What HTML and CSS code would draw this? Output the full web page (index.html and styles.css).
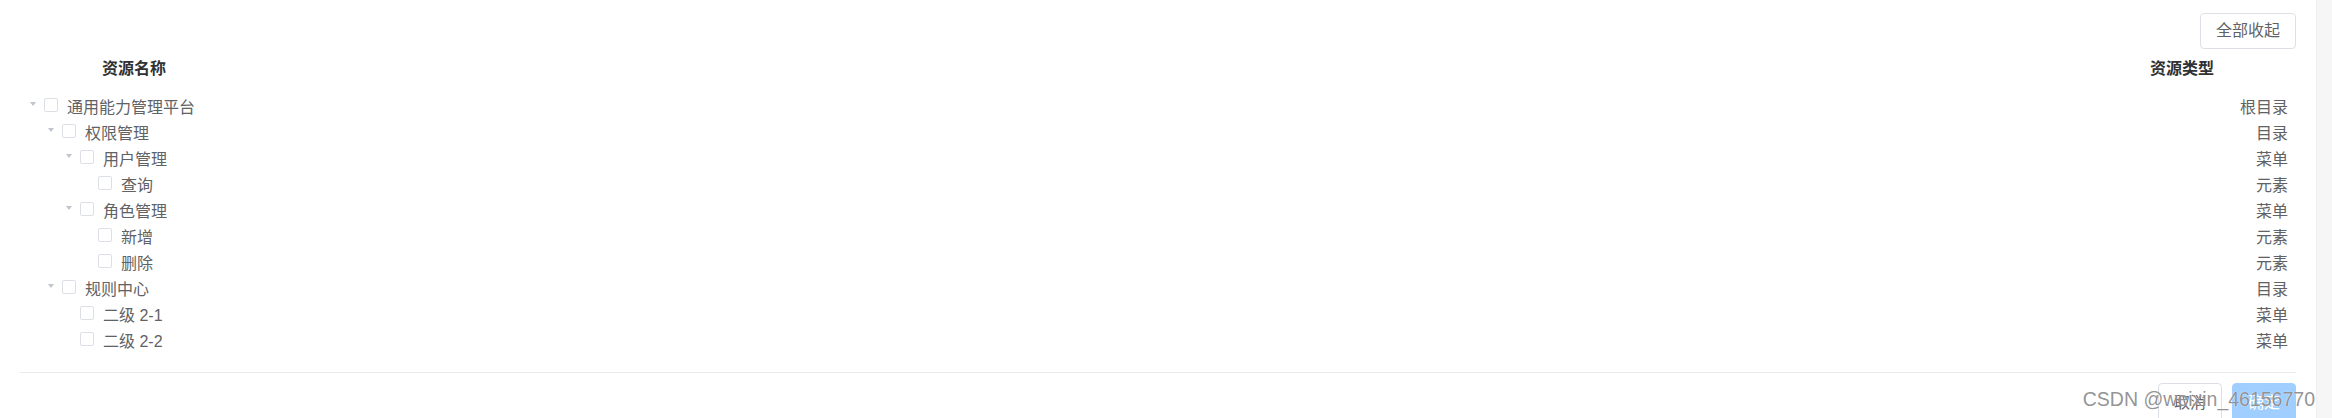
FILE: index.html
```html
<!DOCTYPE html>
<html lang="zh-CN">
<head>
  <meta charset="UTF-8">
  <meta name="viewport" content="width=device-width, initial-scale=1">
  <title>资源配置</title>
  <link rel="stylesheet" href="styles.css">
</head>
<body>
  <div class="page">
    <div class="panel">
      <div class="toolbar">
        <button class="btn">全部收起</button>
      </div>

      <div class="thead">
        <span>资源名称</span>
        <span>资源类型</span>
      </div>

      <ul class="tree">
        <li class="node lv1">
          <div class="name"><i class="caret"></i><span class="check"></span><span class="label">通用能力管理平台</span></div>
          <span class="type">根目录</span>
        </li>
        <li class="node lv2">
          <div class="name"><i class="caret"></i><span class="check"></span><span class="label">权限管理</span></div>
          <span class="type">目录</span>
        </li>
        <li class="node lv3">
          <div class="name"><i class="caret"></i><span class="check"></span><span class="label">用户管理</span></div>
          <span class="type">菜单</span>
        </li>
        <li class="node lv4">
          <div class="name"><i class="caret leaf"></i><span class="check"></span><span class="label">查询</span></div>
          <span class="type">元素</span>
        </li>
        <li class="node lv3">
          <div class="name"><i class="caret"></i><span class="check"></span><span class="label">角色管理</span></div>
          <span class="type">菜单</span>
        </li>
        <li class="node lv4">
          <div class="name"><i class="caret leaf"></i><span class="check"></span><span class="label">新增</span></div>
          <span class="type">元素</span>
        </li>
        <li class="node lv4">
          <div class="name"><i class="caret leaf"></i><span class="check"></span><span class="label">删除</span></div>
          <span class="type">元素</span>
        </li>
        <li class="node lv2">
          <div class="name"><i class="caret"></i><span class="check"></span><span class="label">规则中心</span></div>
          <span class="type">目录</span>
        </li>
        <li class="node lv3">
          <div class="name"><i class="caret leaf"></i><span class="check"></span><span class="label">二级 2-1</span></div>
          <span class="type">菜单</span>
        </li>
        <li class="node lv3">
          <div class="name"><i class="caret leaf"></i><span class="check"></span><span class="label">二级 2-2</span></div>
          <span class="type">菜单</span>
        </li>
      </ul>

      <div class="footer">
        <button class="btn">取消</button>
        <button class="btn btn-primary" disabled>确定</button>
      </div>
    </div>
    <div class="scroll-track"></div>

    <div class="watermark">CSDN @weixin_46156770</div>
  </div>
</body>
</html>
```

FILE: styles.css
```css
html, body {
  margin: 0;
  height: 100%;
  overflow: hidden;
}

body {
  font-family: 'Liberation Sans', 'Noto Sans CJK SC', sans-serif;
  font-size: 16px;
  color: #606266;
  background: #fff;
}

.page {
  position: relative;
  display: flex;
  height: 100%;
}

.panel {
  flex: 1;
  padding: 0 20px;
}

.scroll-track {
  width: 15px;
  background: #f6f6f7;
  border-left: 1px solid #f0f0f2;
}

.toolbar {
  display: flex;
  justify-content: flex-end;
  padding-top: 13px;
}

.btn {
  height: 36px;
  padding: 0 15px;
  border: 1px solid #dcdfe6;
  border-radius: 4px;
  background: #fff;
  color: #606266;
  font-family: inherit;
  font-size: 16px;
  line-height: 1;
  cursor: pointer;
}

.btn-primary {
  background: #a0cfff;
  border-color: #a0cfff;
  color: #fff;
  cursor: not-allowed;
}

.thead {
  display: flex;
  justify-content: space-between;
  align-items: center;
  height: 26px;
  margin-top: 5px;
  padding: 0 82px;
  font-weight: bold;
  color: #303133;
}

.tree {
  list-style: none;
  margin: 14px 0 0;
  padding: 0;
}

.node {
  display: flex;
  justify-content: space-between;
  align-items: center;
  height: 26px;
  margin-top: -1px;
  margin-bottom: 1px;
}

.lv2 { padding-left: 18px; }
.lv3 { padding-left: 36px; }
.lv4 { padding-left: 54px; }

.name {
  display: flex;
  align-items: center;
}

.caret {
  display: flex;
  align-items: center;
  width: 24px;
  height: 26px;
  padding-left: 10px;
  box-sizing: border-box;
  margin-top: -4px;
}

.caret::before {
  content: "";
  border-left: 3.5px solid transparent;
  border-right: 3.5px solid transparent;
  border-top: 4px solid #c0c4cc;
}

.caret.leaf::before {
  border-top-color: transparent;
}

.check {
  width: 14px;
  height: 14px;
  border: 1px solid #dcdfe6;
  border-radius: 2px;
  box-sizing: border-box;
  background: #fff;
  margin-top: -3px;
}

.label {
  margin-left: 9px;
}

.type {
  padding-right: 8px;
}

.footer {
  display: flex;
  justify-content: flex-end;
  margin-top: 19px;
  padding-top: 10px;
  border-top: 1px solid #e8eaec;
}

.footer .btn {
  height: 40px;
  margin-left: 10px;
}

.footer .btn-primary {
  width: 64px;
}

.watermark {
  position: absolute;
  right: 17px;
  top: 389px;
  font-family: 'Liberation Sans', sans-serif;
  font-size: 19.5px;
  line-height: 20px;
  color: rgba(100, 100, 100, 0.7);
  text-shadow: 0 0 1px #fff;
  pointer-events: none;
}
```
